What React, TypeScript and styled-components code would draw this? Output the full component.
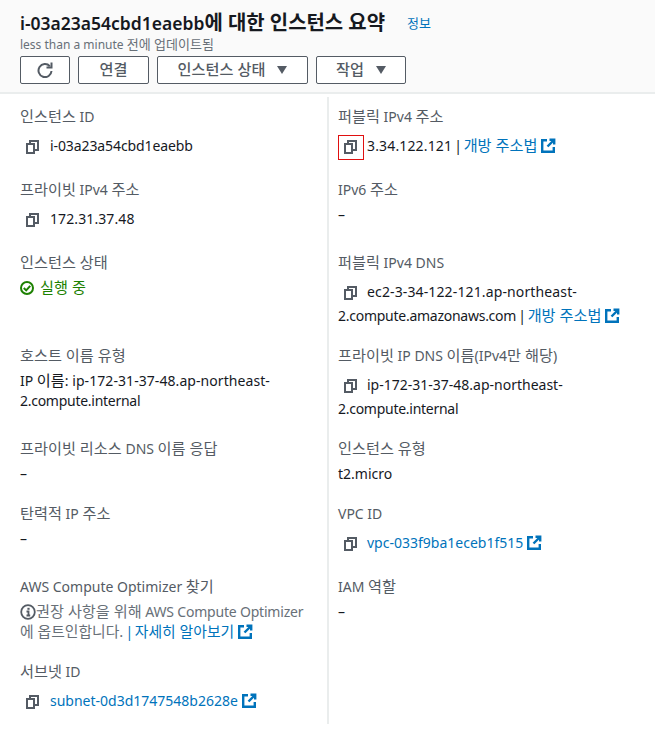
import React from "react";
import styled, { createGlobalStyle } from "styled-components";

const GlobalStyle = createGlobalStyle`
    html, body {
        margin: 0;
        padding: 0;
        background: #ffffff;
    }
    body {
        font-family: "Noto Sans", "Noto Sans CJK KR", sans-serif;
        font-size: 14px;
        color: #16191f;
    }
`;

const Page = styled.div`
    width: 655px;
    height: 731px;
    overflow: hidden;
`;

const Header = styled.header`
    height: 94px;
    box-sizing: border-box;
    padding: 11px 20px 0;
    background: #fafafa;
    border-bottom: 2px solid #eaeded;
`;

const TitleRow = styled.div`
    display: flex;
    align-items: center;
    height: 25px;
`;

const Title = styled.h1`
    margin: 0;
    font-size: 17.5px;
    font-weight: 600;
    line-height: 25px;
    color: #16191f;
`;

/* Korean runs sit a little larger than the latin text around them */
const Ko = styled.span<{ $scale?: number }>`
    font-size: ${(p) => p.$scale || 1.085}em;
    line-height: 1;
`;

const Tracked = styled.span<{ $by: number }>`
    letter-spacing: ${(p) => p.$by}px;
`;

const InfoLink = styled.a`
    margin-left: 22px;
    font-size: 12px;
    color: #0073bb;
`;

const Updated = styled.div`
    font-size: 12px;
    line-height: 17px;
    color: #687078;
`;

const Toolbar = styled.div`
    display: flex;
    gap: 8px;
    margin-top: 3px;
`;

const Button = styled.button<{ $width: number }>`
    display: flex;
    align-items: center;
    justify-content: center;
    gap: 12px;
    width: ${(p) => p.$width}px;
    height: 28px;
    padding: 0;
    box-sizing: border-box;
    background: #ffffff;
    border: 1px solid #545b64;
    border-radius: 2px;
    font-family: inherit;
    font-size: 14px;
    font-weight: 500;
    color: #545b64;
`;

const Grid = styled.div`
    display: grid;
    grid-template-columns: 327px 328px;
    margin-top: 3px;
`;

const CopyButton = styled.span<{ $focused?: boolean }>`
    display: inline-flex;
    align-items: center;
    width: 26px;
    height: 25px;
    margin: -3px 3px -3px 0;
    padding-left: 5px;
    box-sizing: border-box;
    vertical-align: middle;
    border: 1px solid ${(p) => (p.$focused ? "#e01010" : "transparent")};
    color: #545b64;
`;

const Cell = styled.div<{ $tail?: boolean }>`
    padding: 0 10px ${(p) => (p.$tail ? 7 : 0)}px 20px;
    min-width: 0;

    &:nth-child(-n + 2) {
        padding-top: 9px;
    }
    &:nth-child(odd) ${CopyButton} {
        margin-right: 4px;
    }
    &:nth-child(even) {
        border-left: 2px solid #eaeded;
        padding-left: 9px;
    }
`;

const Label = styled.div`
    font-size: 14px;
    line-height: 22px;
    color: #545b64;
`;

const Value = styled.div`
    margin-top: 4px;
    padding-bottom: 19px;
    line-height: 20px;
    color: #16191f;
`;

const CopyValue = styled.div<{ $tail?: boolean }>`
    margin-top: 6px;
    min-height: 28px;
    padding-bottom: ${(p) => (p.$tail ? 0 : 17)}px;
    line-height: 24px;
`;

const Link = styled.a`
    color: #0073bb;
`;

const Separator = styled.span`
    margin: 0 -2px 0 -1.5px;
`;

const Status = styled.div`
    display: flex;
    align-items: center;
    gap: 6px;
    margin-top: 2px;
    height: 24px;
    color: #1d8102;
`;

const Muted = styled.span`
    color: #687078;
`;

const IconSlot = styled.span`
    display: inline-block;
    vertical-align: -2px;
    margin-left: 4px;
    line-height: 0;
`;

const InlineIcon = styled.span`
    display: inline-block;
    vertical-align: -3px;
    line-height: 0;
`;

function CopyIcon() {
    return (
        <svg width="13" height="14" viewBox="0 0 13 14" fill="none" stroke="currentColor" strokeWidth="2">
            <rect x="1" y="4" width="7" height="9" />
            <path d="M4 4V1H12V10H8" />
        </svg>
    );
}

function ExternalIcon() {
    return (
        <svg width="15" height="15" viewBox="0 0 15 15" fill="none" stroke="#0073bb" strokeWidth="2.4">
            <path d="M6 2.2H1.2V13.8H12.8V9" />
            <path d="M8.5 1.8H13.2V6.5" />
            <path d="M13 2L6.5 8.5" />
        </svg>
    );
}

function RefreshIcon() {
    return (
        <svg width="16" height="16" viewBox="0 0 16 16" fill="none" stroke="#545b64" strokeWidth="2">
            <path d="M12.8 4.2A6.5 6.5 0 1 0 14.5 9" />
            <path d="M14.5 0.5V5.5H9.5" />
        </svg>
    );
}

function CaretIcon() {
    return (
        <svg width="10" height="8" viewBox="0 0 10 8">
            <path d="M0 0H10L5 8Z" fill="#545b64" />
        </svg>
    );
}

function CheckCircleIcon() {
    return (
        <svg width="14" height="14" viewBox="0 0 14 14" fill="none" stroke="#1d8102" strokeWidth="2">
            <circle cx="7" cy="7" r="6" />
            <path d="M3.8 7L6.2 9.4L10.2 4.8" />
        </svg>
    );
}

function InfoCircleIcon() {
    return (
        <svg width="16" height="16" viewBox="0 0 16 16" fill="none">
            <circle cx="8" cy="8" r="6.8" stroke="#545b64" strokeWidth="1.8" />
            <path d="M6.5 7.5H8.5V11.5M6.5 11.5H10.2" stroke="#545b64" strokeWidth="1.8" />
            <path d="M8.5 3.8V5.8" stroke="#545b64" strokeWidth="2.2" />
        </svg>
    );
}

function External() {
    return (
        <IconSlot>
            <ExternalIcon />
        </IconSlot>
    );
}

export default function App() {
    return (
        <Page>
            <GlobalStyle />
            <Header>
                <TitleRow>
                    <Title>i-03a23a54cbd1eaebb<Ko $scale={1.14}>에 대한 인스턴스 요약</Ko></Title>
                    <InfoLink><Ko>정보</Ko></InfoLink>
                </TitleRow>
                <Updated>less than a minute <Ko>전에 업데이트됨</Ko></Updated>
                <Toolbar>
                    <Button $width={50}><RefreshIcon /></Button>
                    <Button $width={71}><Ko>연결</Ko></Button>
                    <Button $width={151}><Ko>인스턴스 상태</Ko> <CaretIcon /></Button>
                    <Button $width={90}><Ko>작업</Ko> <CaretIcon /></Button>
                </Toolbar>
            </Header>
            <Grid>
                <Cell>
                    <Label><Ko>인스턴스</Ko> ID</Label>
                    <CopyValue><CopyButton><CopyIcon /></CopyButton><Tracked $by={-0.1}>i-03a23a54cbd1eaebb</Tracked></CopyValue>
                </Cell>
                <Cell>
                    <Label><Ko>퍼블릭</Ko> IPv4 <Ko>주소</Ko></Label>
                    <CopyValue>
                        <CopyButton $focused><CopyIcon /></CopyButton><Tracked $by={0.15}>3.34.122.121</Tracked> <Separator>|</Separator> <Link><Ko>개방 주소법</Ko></Link><External />
                    </CopyValue>
                </Cell>

                <Cell>
                    <Label><Ko>프라이빗</Ko> IPv4 <Ko>주소</Ko></Label>
                    <CopyValue><CopyButton><CopyIcon /></CopyButton><Tracked $by={0.1}>172.31.37.48</Tracked></CopyValue>
                </Cell>
                <Cell>
                    <Label>IPv6 <Ko>주소</Ko></Label>
                    <Value>–</Value>
                </Cell>

                <Cell>
                    <Label><Ko>인스턴스 상태</Ko></Label>
                    <Status><CheckCircleIcon /><Ko>실행 중</Ko></Status>
                </Cell>
                <Cell>
                    <Label><Ko>퍼블릭</Ko> IPv4 DNS</Label>
                    <CopyValue>
                        <CopyButton><CopyIcon /></CopyButton><Tracked $by={0.13}>ec2-3-34-122-121.ap-northeast-</Tracked><Tracked $by={-0.26}>2.compute.amazonaws.com</Tracked> <Separator>|</Separator> <Link><Ko>개방 주소법</Ko></Link><External />
                    </CopyValue>
                </Cell>

                <Cell>
                    <Label><Ko>호스트 이름 유형</Ko></Label>
                    <Value>IP <Ko>이름</Ko>: <Tracked $by={0.07}>ip-172-31-37-48.ap-northeast-</Tracked><Tracked $by={-0.27}>2.compute.internal</Tracked></Value>
                </Cell>
                <Cell>
                    <Label><Ko>프라이빗</Ko> IP DNS <Ko>이름</Ko>(IPv4<Ko>만 해당</Ko>)</Label>
                    <CopyValue>
                        <CopyButton><CopyIcon /></CopyButton>ip-172-31-37-48.ap-northeast-<Tracked $by={-0.27}>2.compute.internal</Tracked>
                    </CopyValue>
                </Cell>

                <Cell>
                    <Label><Ko>프라이빗 리소스</Ko> DNS <Ko>이름 응답</Ko></Label>
                    <Value>–</Value>
                </Cell>
                <Cell>
                    <Label><Ko>인스턴스 유형</Ko></Label>
                    <Value>t2.micro</Value>
                </Cell>

                <Cell>
                    <Label><Ko>탄력적</Ko> IP <Ko>주소</Ko></Label>
                    <Value>–</Value>
                </Cell>
                <Cell>
                    <Label>VPC ID</Label>
                    <CopyValue><CopyButton><CopyIcon /></CopyButton><Link>vpc-033f9ba1eceb1f515</Link><External /></CopyValue>
                </Cell>

                <Cell>
                    <Label>AWS Compute Optimizer <Ko>찾기</Ko></Label>
                    <Value>
                        <Muted><InlineIcon><InfoCircleIcon /></InlineIcon><Ko>권장 사항을 위해</Ko> <Tracked $by={-0.2}>AWS Compute Optimizer</Tracked><br /><Ko $scale={1.06}>에 옵트인합니다.</Ko></Muted> <Link><Separator>|</Separator> <Ko $scale={1.06}>자세히 알아보기</Ko></Link><External />
                    </Value>
                </Cell>
                <Cell>
                    <Label>IAM <Ko>역할</Ko></Label>
                    <Value>–</Value>
                </Cell>

                <Cell $tail>
                    <Label><Ko>서브넷</Ko> ID</Label>
                    <CopyValue $tail><CopyButton><CopyIcon /></CopyButton><Link>subnet-0d3d1747548b2628e</Link><External /></CopyValue>
                </Cell>
                <Cell $tail />
            </Grid>
        </Page>
    );
}
